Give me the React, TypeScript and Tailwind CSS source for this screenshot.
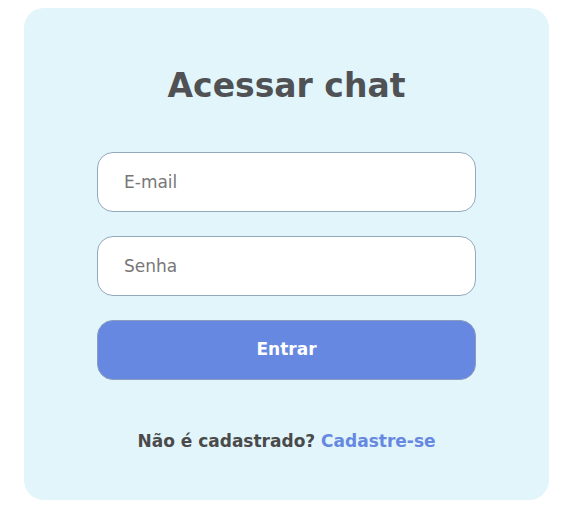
export default function App() {
  return (
    <div className="w-[578px] h-[528px] bg-white pt-2 pl-6" style={{ fontFamily: '"DejaVu Sans", "Noto Sans", sans-serif' }}>
      <div className="w-[525px] h-[492px] bg-[#e1f5fb] rounded-[20px] flex flex-col items-center pt-[56px]">
        <h1 className="text-[33px] leading-[44px] font-bold text-[#4f5154]">Acessar chat</h1>
        <div className="mt-[44px] w-[379px] flex flex-col gap-6">
          <input
            className="h-[60px] w-full rounded-[16px] border border-[#94a9bd] bg-white px-[26px] text-[17px] text-[#555] placeholder:text-[#777] outline-none"
            placeholder="E-mail"
          />
          <input
            className="h-[60px] w-full rounded-[16px] border border-[#94a9bd] bg-white px-[26px] text-[17px] text-[#555] placeholder:text-[#777] outline-none"
            placeholder="Senha"
            type="password"
          />
          <button className="h-[60px] w-full rounded-[16px] border border-[#8a9cc0] bg-[#6688e0] text-[17px] font-bold text-white">
            Entrar
          </button>
        </div>
        <p className="mt-[49px] text-[17px] font-bold text-[#4a4a4a]">
          Não é cadastrado? <span className="text-[#6688e0]">Cadastre-se</span>
        </p>
      </div>
    </div>
  );
}
